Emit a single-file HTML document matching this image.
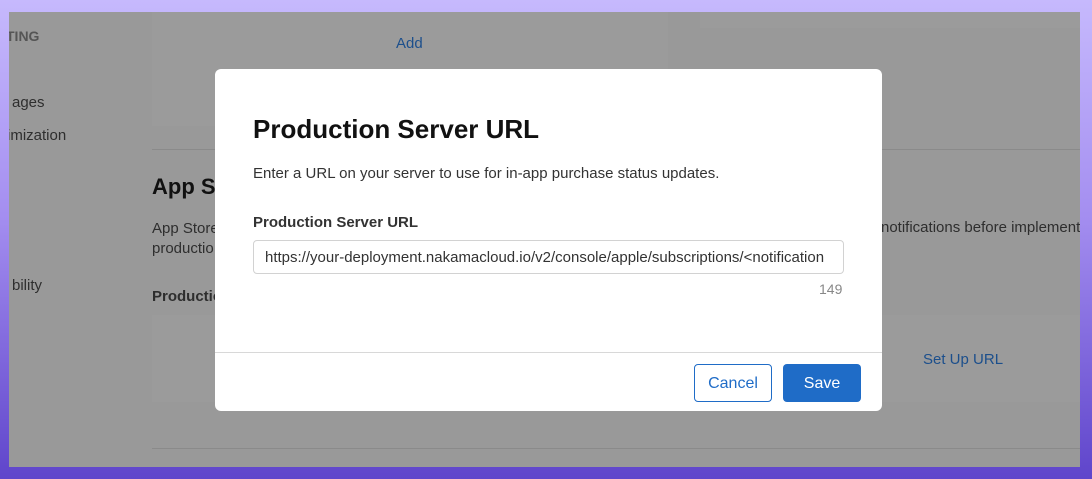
<!DOCTYPE html>
<html><head><meta charset="utf-8"><style>
*{box-sizing:border-box;margin:0;padding:0}
body{width:1092px;height:479px;overflow:hidden;position:relative;font-family:"Liberation Sans",sans-serif;background:linear-gradient(180deg,#c6b9fd 0%,#a48ef0 45%,#5f45cb 100%)}
.frame{position:absolute;left:9px;top:12px;width:1071px;height:455px;background:#999;overflow:hidden}
.a{position:absolute;white-space:nowrap;color:#2e2e2e}
.card{position:absolute;background:#9b9b9b}
.hr{position:absolute;height:1px;background:#8a8a8a}
.modal{position:absolute;left:215px;top:69px;width:667px;height:342px;background:#fff;border-radius:6px;overflow:hidden}
</style></head><body>
<div class="frame">
 <div class="card" style="left:143px;top:0;width:516px;height:114px"></div>
 <div class="card" style="left:691px;top:0;width:380px;height:16px"></div>
 <div class="card" style="left:143px;top:303px;width:928px;height:87px"></div>
 <div class="hr" style="left:143px;top:137px;width:928px"></div>
 <div class="hr" style="left:143px;top:436px;width:928px"></div>
 <div class="a" style="left:-3px;top:16px;font-size:14px;font-weight:bold;color:#555">TING</div>
 <div class="a" style="left:3px;top:82px;font-size:15px">ages</div>
 <div class="a" style="left:-2px;top:115px;font-size:15px">imization</div>
 <div class="a" style="left:3px;top:265px;font-size:15px">bility</div>
 <div class="a" style="left:387px;top:23px;font-size:15px;color:#1c4f8c">Add</div>
 <div class="a" style="left:143px;top:162px;font-size:22px;font-weight:bold;color:#111">App S</div>
 <div class="a" style="left:143px;top:207px;font-size:15px;line-height:20px">App Store<br>productio</div>
 <div class="a" style="left:143px;top:276px;font-size:15px;font-weight:bold">Productio</div>
 <div class="a" style="left:872px;top:207px;font-size:15px">notifications before implement</div>
 <div class="a" style="left:914px;top:339px;font-size:15px;color:#1c4f8c">Set Up URL</div>
</div>
<div class="modal">
 <div class="a" style="left:38px;top:45px;font-size:26px;font-weight:bold;color:#111">Production Server URL</div>
 <div class="a" style="left:38px;top:96px;font-size:15px;color:#333">Enter a URL on your server to use for in-app purchase status updates.</div>
 <div class="a" style="left:38px;top:145px;font-size:15px;font-weight:bold;color:#333">Production Server URL</div>
 <div style="position:absolute;left:38px;top:171px;width:591px;height:34px;border:1px solid #d2d2d2;border-radius:4px;overflow:hidden">
  <div class="a" style="left:11px;top:8px;font-size:15px;color:#333">https://your-deployment.nakamacloud.io/v2/console/apple/subscriptions/&lt;notification</div>
 </div>
 <div class="a" style="left:604px;top:212px;font-size:14px;color:#888">149</div>
 <div style="position:absolute;left:0;top:283px;width:667px;height:1px;background:#d8d8d8"></div>
 <div style="position:absolute;left:479px;top:295px;width:78px;height:38px;border:1px solid #1f6cc7;border-radius:4px;color:#1f6cc7;font-size:16px;text-align:center;line-height:38px">Cancel</div>
 <div style="position:absolute;left:568px;top:295px;width:78px;height:38px;background:#1f6cc7;border-radius:4px;color:#fff;font-size:16px;text-align:center;line-height:40px">Save</div>
</div>
</body></html>
